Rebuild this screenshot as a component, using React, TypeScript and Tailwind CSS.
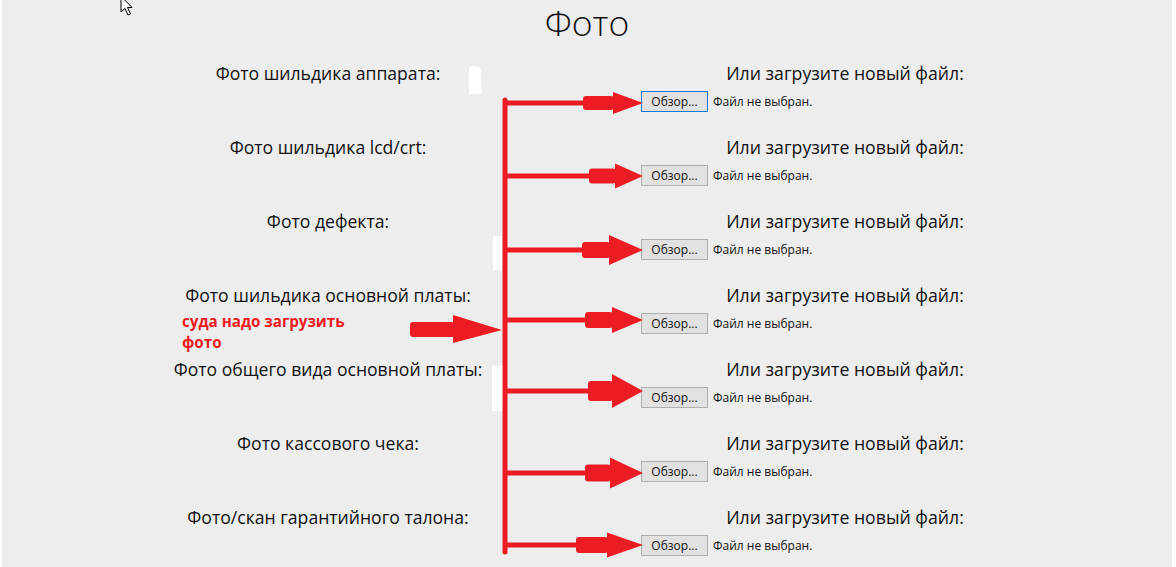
const ROWS = [
  "Фото шильдика аппарата:",
  "Фото шильдика lcd/crt:",
  "Фото дефекта:",
  "Фото шильдика основной платы:",
  "Фото общего вида основной платы:",
  "Фото кассового чека:",
  "Фото/скан гарантийного талона:",
];

// hand-drawn red arrows, one per row: centre y, shaft start, head start, half heights
const ARROWS = [
  { y: 103, s: 583, h: 613, sh: 7, hh: 11 },
  { y: 176, s: 589, h: 615, sh: 7.5, hh: 12.5 },
  { y: 250, s: 582, h: 609, sh: 8, hh: 15 },
  { y: 320, s: 585, h: 612, sh: 8, hh: 13 },
  { y: 391, s: 588, h: 612, sh: 10, hh: 17 },
  { y: 473, s: 585, h: 610, sh: 8.5, hh: 15.5 },
  { y: 545, s: 576, h: 607, sh: 8, hh: 12.5 },
];

function FileRow({ label, focused }: { label: string; focused?: boolean }) {
  return (
    <div className="flex h-[74px]">
      <div className="w-[626px] text-center text-[17.6px] leading-[28px] text-[#111]">{label}</div>
      <div className="w-[408px]">
        <div className="text-center text-[17.7px] leading-[28px] text-[#111]">Или загрузите новый файл:</div>
        <div className="mt-[4px] flex items-center gap-[5px]">
          <button
            className={
              "h-[21px] w-[67px] border bg-[#e1e1e1] text-[12px] leading-none text-[#111] " +
              (focused ? "border-[#0078d7]" : "border-[#adadad]")
            }
          >
            Обзор...
          </button>
          <span className="text-[12px] text-[#111]">Файл не выбран.</span>
        </div>
      </div>
    </div>
  );
}

function Annotations() {
  const red = "#ed1c24";
  return (
    <svg className="pointer-events-none absolute inset-0" width="1176" height="567">
      {/* white paint blobs */}
      <path d="M469 70 Q469 66 474 66 L479 67 Q482 70 481 80 L482 94 L469 94 Z" fill="#fff" />
      <rect x="493" y="236" width="9" height="34" fill="#fff" />
      <rect x="492" y="366" width="11" height="45" fill="#fff" />
      <line x1="505" y1="100" x2="505" y2="552" stroke={red} strokeWidth="5" strokeLinecap="round" />
      {ARROWS.map((a) => (
        <g key={a.y} fill={red}>
          <line x1="507" y1={a.y} x2={a.s + 2} y2={a.y} stroke={red} strokeWidth="5" strokeLinecap="round" />
          <rect x={a.s} y={a.y - a.sh} width={a.h - a.s + 1} height={a.sh * 2} rx="3" />
          <polygon points={`${a.h},${a.y - a.hh} 643,${a.y} ${a.h},${a.y + a.hh}`} />
        </g>
      ))}
      {/* big arrow pointing at the trunk */}
      <rect x="410" y="322" width="45" height="15" rx="3" fill={red} />
      <polygon points="453,315 502,330 453,343" fill={red} />
      {/* mouse pointer */}
      <polygon
        points="121,-4 121,12 125,8.5 128,15 130.5,14 127.5,7.5 132,7.5"
        fill="#fff"
        stroke="#000"
        strokeWidth="1"
      />
    </svg>
  );
}

export default function App() {
  return (
    <div className="h-[567px] w-[1176px] bg-white pl-[2px] pr-[4px]" style={{ fontFamily: '"Open Sans", "Noto Sans", sans-serif' }}>
      <div className="relative h-full bg-[#ededed]">
        <h1 className="text-center text-[35.5px] font-light leading-[44px] text-[#111]">Фото</h1>
        <div className="pt-[15px] pl-[13px]">
          {ROWS.map((r, i) => (
            <FileRow key={r} label={r} focused={i === 0} />
          ))}
        </div>
        <div className="absolute left-[180px] top-[311px] text-[15.2px] font-bold leading-[21px] text-[#ed1c24]">
          суда надо загрузить
          <br />
          фото
        </div>
      </div>
      <Annotations />
    </div>
  );
}
